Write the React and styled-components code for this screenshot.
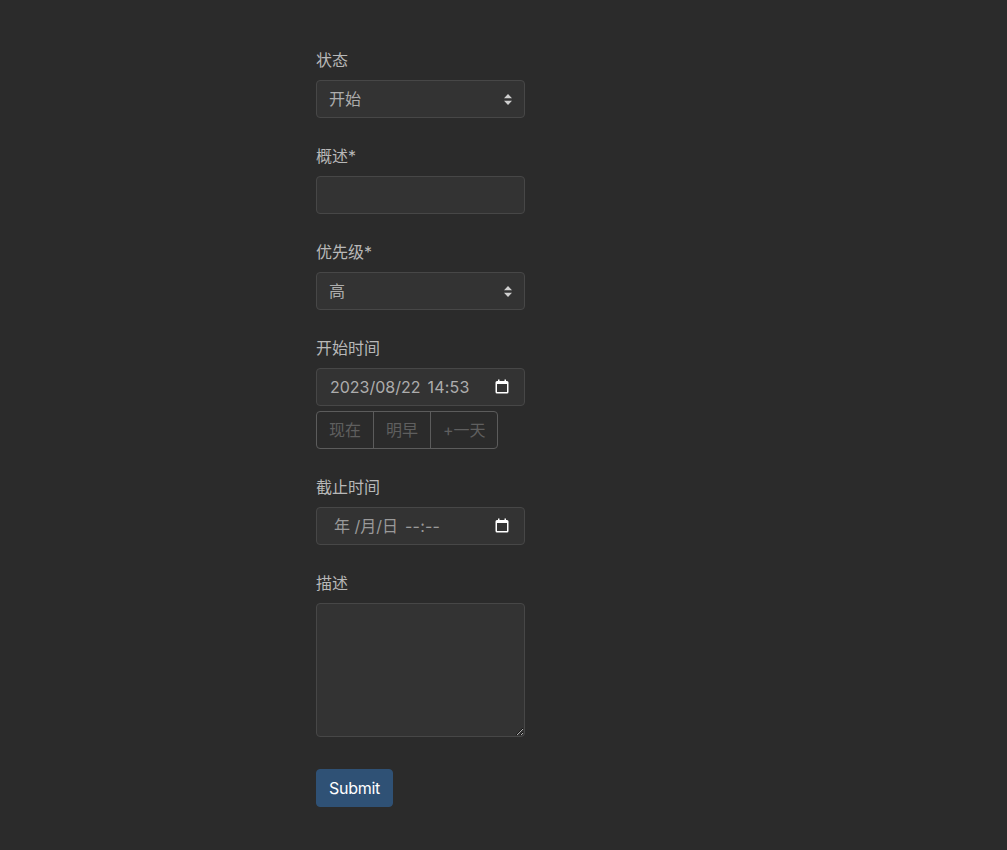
import React from 'react'
import styled, { createGlobalStyle } from 'styled-components'

const fontStack = `Inter, "Noto Sans CJK SC", "Liberation Sans", sans-serif`

const GlobalStyle = createGlobalStyle`
  * { box-sizing: border-box; }
  html, body { margin: 0; background: #2b2b2b; }
  body { font-family: ${fontStack}; font-size: 16px; line-height: 24px; color: #bdbdbd; }
`

const Page = styled.div`
  min-height: 850px;
  padding: 48px 0 43px 316px;
`
const Form = styled.form`
  width: 209px;
`
const Field = styled.div`
  margin-bottom: ${(p) => p.$gap || '26px'};
`
const Label = styled.label`
  display: block;
  height: 24px;
  margin-bottom: 8px;
  color: #b8b8b8;
`
const controlStyles = `
  display: block;
  width: 100%;
  height: 38px;
  padding: 6px 12px;
  background-color: #333333;
  border: 1px solid #474747;
  border-radius: 4px;
  color: #adadad;
  font-family: ${fontStack};
  font-size: 16px;
  line-height: 24px;
  outline: none;
`
const Input = styled.input`
  ${controlStyles}
`
const Select = styled.select`
  ${controlStyles}
  appearance: none;
  padding-right: 36px;
  background-image: url("data:image/svg+xml,%3csvg xmlns='http://www.w3.org/2000/svg' width='8' height='11' viewBox='0 0 8 11'%3e%3cpath fill='%23cfcfcf' d='M4 0l4 4.200H0zM4 11L0 6.800h8z'/%3e%3c/svg%3e");
  background-repeat: no-repeat;
  background-position: right 12px center;
  background-size: 8px 11px;
`
const DateBox = styled.div`
  ${controlStyles}
  display: flex;
  align-items: center;
  justify-content: space-between;
  padding-left: ${(p) => (p.$empty ? '17px' : '13px')};
  padding-right: 15px;
  white-space: pre;
  color: ${(p) => (p.$empty ? '#9a9a9a' : '#adadad')};
`
const DateText = styled.span`
  display: flex;
  gap: 7px;
`
const TimeText = styled.span`
  letter-spacing: 0.2px;
`
const CalendarIcon = () => (
  <svg width="14" height="16" viewBox="0 0 14 16" aria-hidden="true">
    <path
      fill="#ffffff"
      fillRule="evenodd"
      d="M3 0.500h1.500V2h5V0.500H11V2h1a1.500 1.500 0 0 1 1.500 1.500V13a1.500 1.500 0 0 1-1.500 1.500H2A1.500 1.500 0 0 1 0.500 13V3.500A1.500 1.500 0 0 1 2 2h1zM2 5v8h10V5z"
    />
  </svg>
)
const QuickGroup = styled.div`
  display: inline-flex;
  margin-top: 5px;
  vertical-align: top;
`
const QuickButton = styled.button`
  height: 38px;
  padding: 6px 12px;
  margin-left: -1px;
  background: transparent;
  border: 1px solid #5c5c5c;
  color: #5f5f5f;
  font-family: ${fontStack};
  font-size: 16px;
  line-height: 24px;
  &:first-child {
    margin-left: 0;
    border-radius: 4px 0 0 4px;
  }
  &:last-child {
    padding-right: 11px;
    border-radius: 0 4px 4px 0;
  }
`
const GroupField = styled(Field)`
  display: flow-root;
`
const TextArea = styled.textarea`
  ${controlStyles}
  height: 134px;
  resize: vertical;
`
const SubmitButton = styled.button`
  display: block;
  width: 77px;
  height: 38px;
  padding: 6px 0;
  background: #2f5175;
  border: 1px solid #2f5175;
  border-radius: 4px;
  color: #ffffff;
  font-family: ${fontStack};
  font-size: 16px;
  font-weight: 400;
  line-height: 24px;
  letter-spacing: -0.3px;
`

const App = () => {
  const noSubmit = (e) => e.preventDefault()

  return (
    <Page>
      <GlobalStyle />
      <Form onSubmit={noSubmit}>
        <Field>
          <Label>状态</Label>
          <Select defaultValue="开始">
            <option>开始</option>
            <option>进行中</option>
            <option>完成</option>
          </Select>
        </Field>
        <Field>
          <Label>概述*</Label>
          <Input type="text" />
        </Field>
        <Field>
          <Label>优先级*</Label>
          <Select defaultValue="高">
            <option>高</option>
            <option>中</option>
            <option>低</option>
          </Select>
        </Field>
        <GroupField>
          <Label>开始时间</Label>
          <DateBox>
            <DateText>
              <span>2023/08/22</span>
              <TimeText>14:53</TimeText>
            </DateText>
            <CalendarIcon />
          </DateBox>
          <QuickGroup>
            <QuickButton type="button">现在</QuickButton>
            <QuickButton type="button">明早</QuickButton>
            <QuickButton type="button">+一天</QuickButton>
          </QuickGroup>
        </GroupField>
        <Field>
          <Label>截止时间</Label>
          <DateBox $empty>
            <DateText>
              <span>年 /月/日</span>
              <TimeText>--:--</TimeText>
            </DateText>
            <CalendarIcon />
          </DateBox>
        </Field>
        <Field $gap="32px">
          <Label>描述</Label>
          <TextArea />
        </Field>
        <SubmitButton type="submit">Submit</SubmitButton>
      </Form>
    </Page>
  )
}

export default App
